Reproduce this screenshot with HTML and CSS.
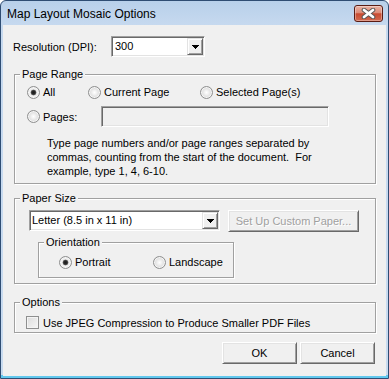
FILE: index.html
```html
<!DOCTYPE html>
<html>
<head>
<meta charset="utf-8">
<title>Map Layout Mosaic Options</title>
<link rel="stylesheet" href="styles.css">
</head>
<body>
<div class="window">
  <div class="titlebar">
    <span class="title">Map Layout Mosaic Options</span>
    <div class="close">
      <svg width="15" height="11" viewBox="0 0 15 11">
        <path d="M3 2 L12 9 M12 2 L3 9" stroke="#555555" stroke-width="4.6" stroke-linecap="round"/>
        <path d="M3 2 L12 9 M12 2 L3 9" stroke="#ffffff" stroke-width="2.8" stroke-linecap="round"/>
      </svg>
    </div>
  </div>
  <div class="client">
    <div class="res-row">
      <span class="res-label">Resolution (DPI):</span>
      <div class="combo combo-res">
        <span class="combo-text pad2">300</span>
        <span class="drop"><svg width="7" height="4" viewBox="0 0 7 4" shape-rendering="crispEdges"><path d="M0 0H7V1H6V2H5V3H4V4H3V3H2V2H1V1H0Z" fill="#000"/></svg></span>
      </div>
    </div>

    <fieldset class="group g-range">
      <legend>Page Range</legend>
      <div class="range-body">
        <div class="radio-row">
          <label class="opt w61"><span class="radio checked"></span>All</label>
          <label class="opt w112"><span class="radio"></span>Current Page</label>
          <label class="opt"><span class="radio"></span>Selected Page(s)</label>
        </div>
        <div class="pages-row">
          <label class="opt w74"><span class="radio"></span>Pages:</label>
          <div class="textbox"></div>
        </div>
        <p class="hint">Type page numbers and/or page ranges separated by<br>commas, counting from the start of the document.&nbsp; For<br>example, type 1, 4, 6-10.</p>
      </div>
    </fieldset>

    <fieldset class="group g-paper">
      <legend>Paper Size</legend>
      <div class="paper-body">
        <div class="paper-row">
          <div class="combo combo-paper">
            <span class="combo-text pad1">Letter (8.5 in x 11 in)</span>
            <span class="drop"><svg width="7" height="4" viewBox="0 0 7 4" shape-rendering="crispEdges"><path d="M0 0H7V1H6V2H5V3H4V4H3V3H2V2H1V1H0Z" fill="#000"/></svg></span>
          </div>
          <div class="btn btn-custom disabled">Set Up Custom Paper...</div>
        </div>
        <fieldset class="group g-orient">
          <legend>Orientation</legend>
          <div class="orient-body">
            <label class="opt w94"><span class="radio checked"></span>Portrait</label>
            <label class="opt"><span class="radio"></span>Landscape</label>
          </div>
        </fieldset>
      </div>
    </fieldset>

    <fieldset class="group g-options">
      <legend>Options</legend>
      <div class="options-body">
        <label class="opt chk-opt"><span class="checkbox"></span>Use JPEG Compression to Produce Smaller PDF Files</label>
      </div>
    </fieldset>

    <div class="button-row">
      <div class="btn btn-dlg">OK</div>
      <div class="btn btn-dlg">Cancel</div>
    </div>
  </div>
</div>
</body>
</html>
```

FILE: styles.css
```css
* { box-sizing: border-box; }
html, body { margin: 0; padding: 0; background: #ffffff; }
body {
  font-family: "Liberation Sans", Arial, sans-serif;
  font-size: 11px;
  color: #000;
}

.window {
  width: 389px;
  height: 379px;
  border: 1px solid #2f4d73;
  border-radius: 6px 6px 0 0;
  padding: 0 2px 2px;
  background: linear-gradient(to bottom, #b8d0ea 0, #c6d9ef 24px, #c8dbf0 calc(100% - 3px), #62c8ee calc(100% - 3px));
  display: flex;
  flex-direction: column;
}

.titlebar {
  height: 24px;
  display: flex;
  justify-content: space-between;
  align-items: flex-start;
}
.title {
  font-size: 12px;
  line-height: 15px;
  margin: 6px 0 0 4px;
  color: #000;
}
.close {
  width: 29px;
  height: 17px;
  margin: 4px 3px 0 0;
  border: 1px solid #5a1c14;
  border-radius: 3px;
  background: linear-gradient(to bottom, #eab3a5 0, #dc8b78 45%, #c84a30 52%, #d26a50 100%);
  box-shadow: inset 0 0 0 1px rgba(255,255,255,0.35);
  display: flex;
  align-items: center;
  justify-content: center;
}
.close svg { display: block; }

.client {
  flex: 1;
  background: #f0f0f0;
  padding: 11px 10px 0 11px;
}

.res-row {
  display: flex;
  align-items: center;
  height: 21px;
}
.res-label {
  width: 98px;
  margin-left: -1px;
}

.combo {
  display: flex;
  height: 21px;
  background: #fff;
  border: 1px solid;
  border-color: #a0a0a0 #ffffff #ffffff #a0a0a0;
  box-shadow: inset 1px 1px 0 #696969, inset -1px -1px 0 #e3e3e3;
  padding: 1px;
}
.combo-res { width: 94px; }
.combo-paper { width: 191px; }
.combo-text {
  flex: 1;
  line-height: 17px;
  white-space: nowrap;
}
.pad2 { padding-left: 2px; }
.pad1 { padding-left: 1px; }
.drop {
  width: 16px;
  background: #f0f0f0;
  border: 1px solid;
  border-color: #e3e3e3 #696969 #696969 #e3e3e3;
  box-shadow: inset 1px 1px 0 #ffffff, inset -1px -1px 0 #a0a0a0;
  display: flex;
  align-items: center;
  justify-content: center;
}
.drop svg { display: block; }

.group {
  margin: 0;
  padding: 0;
  min-width: 0;
  border: 1px solid #a0a0a0;
  box-shadow: inset 1px 1px 0 #ffffff, 1px 1px 0 #ffffff;
}
.group legend {
  padding: 0 2px;
  margin-left: 5px;
  line-height: 13px;
  font-size: 11px;
  background: #f0f0f0;
}

.g-range { margin-top: 11px; }
.range-body { padding: 3px 0 5px 12px; }
.radio-row {
  display: flex;
  align-items: center;
  height: 16px;
}
.pages-row {
  display: flex;
  align-items: center;
  height: 21px;
  margin-top: 6px;
}
.opt {
  display: flex;
  align-items: center;
  gap: 3px;
  white-space: nowrap;
}
.w61 { width: 61px; }
.w112 { width: 112px; }
.w74 { width: 74px; }
.w94 { width: 94px; }

.radio {
  width: 13px;
  height: 13px;
  flex: none;
  border-radius: 50%;
  border: 1px solid #8e8f8f;
  background: radial-gradient(circle at 50% 50%, #ffffff 0, #f2f2f2 2px, #d8d8d8 5.5px);
  box-shadow: inset 0 0 0 1px #f6f6f6;
}
.radio.checked {
  background: radial-gradient(circle at 50% 50%, #1c1c1c 0, #2a2a2a 1.8px, #6c6c6c 2.6px, #e6e6e6 3.2px, #f2f2f2 4px, #d8d8d8 5.5px);
}
.checkbox {
  width: 13px;
  height: 13px;
  flex: none;
  border: 1px solid #8e8f8f;
  background: linear-gradient(135deg, #dcdcdc 0, #f6f6f6 100%);
  box-shadow: inset 0 0 0 1px #f4f4f4;
}
.chk-opt { gap: 4px; height: 13px; }

.textbox {
  width: 228px;
  height: 21px;
  background: #f0f0f0;
  border: 1px solid;
  border-color: #a0a0a0 #ffffff #ffffff #a0a0a0;
  box-shadow: inset 1px 1px 0 #696969, inset -1px -1px 0 #e3e3e3;
}

.hint {
  margin: 9px 0 0 20px;
  line-height: 14px;
}

.g-paper { margin-top: 8px; }
.paper-body { padding: 5px 0 5px 14px; }
.paper-row {
  display: flex;
  align-items: flex-start;
  gap: 8px;
  height: 23px;
}

.btn {
  display: flex;
  align-items: center;
  justify-content: center;
  background: #f0f0f0;
  border: 1px solid;
  border-color: #ffffff #696969 #696969 #ffffff;
  box-shadow: inset 1px 1px 0 #e3e3e3, inset -1px -1px 0 #a0a0a0;
  white-space: nowrap;
}
.btn-custom { width: 131px; height: 22px; }
.disabled { color: #a0a0a0; text-shadow: 1px 1px 0 #ffffff; }

.g-orient {
  margin: 3px 0 0 9px;
  width: 196px;
}
.orient-body {
  display: flex;
  align-items: center;
  height: 28px;
  padding: 5px 0 7px 20px;
}

.g-options { margin-top: 12px; }
.options-body { padding: 7px 0 3px 11px; }

.button-row {
  display: flex;
  justify-content: flex-end;
  gap: 3px;
  margin: 9px 1px 0 0;
}
.btn-dlg { width: 75px; height: 22px; }
```
